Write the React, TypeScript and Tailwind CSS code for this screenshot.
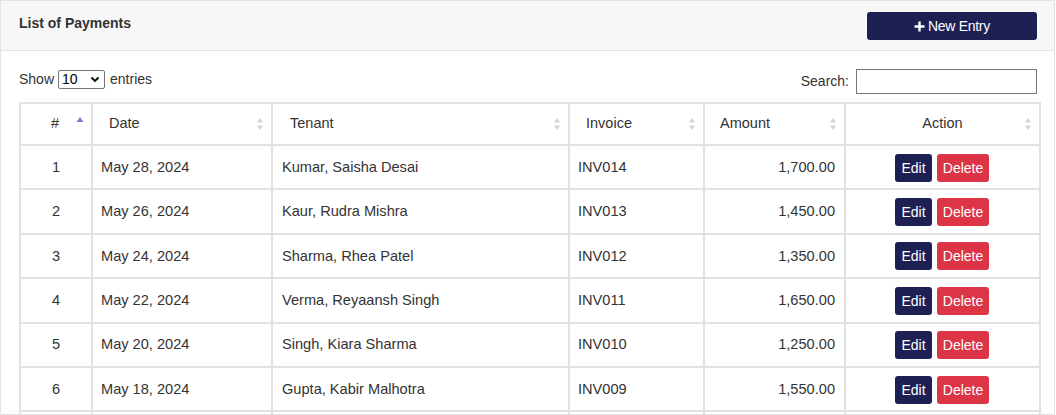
import React from "react";

const rows = [
  ["1", "May 28, 2024", "Kumar, Saisha Desai", "INV014", "1,700.00"],
  ["2", "May 26, 2024", "Kaur, Rudra Mishra", "INV013", "1,450.00"],
  ["3", "May 24, 2024", "Sharma, Rhea Patel", "INV012", "1,350.00"],
  ["4", "May 22, 2024", "Verma, Reyaansh Singh", "INV011", "1,650.00"],
  ["5", "May 20, 2024", "Singh, Kiara Sharma", "INV010", "1,250.00"],
  ["6", "May 18, 2024", "Gupta, Kabir Malhotra", "INV009", "1,550.00"],
  ["7", "May 16, 2024", "Reddy, Anaya Iyer", "INV008", "1,400.00"],
];

function SortIcon({ active }: { active?: boolean }) {
  if (active) {
    return (
      <svg width="8" height="12" viewBox="0 0 8 12" className="absolute right-[7px] top-[12px]">
        <path d="M4 1 L7.5 6 L0.5 6 Z" fill="#7b7fc9" />
      </svg>
    );
  }
  return (
    <svg width="8" height="14" viewBox="0 0 8 14" className="absolute right-[7px] top-[13px]">
      <path d="M4 1 L7 5.5 L1 5.5 Z" fill="#d3d3d3" />
      <path d="M4 13 L7 8.5 L1 8.5 Z" fill="#d3d3d3" />
    </svg>
  );
}

export default function App() {
  const th = "relative border-2 border-[#e2e2e2] border-b-0 font-normal text-[14.5px] text-[#333] h-[42px] p-0";
  const td = "border-2 border-[#e2e2e2] text-[14.6px] text-[#333] p-0 pt-[1px]";
  return (
    <div className="w-[1055px] h-[415px] overflow-hidden border border-[#e3e3e3] bg-white font-['Liberation_Sans',Arial,sans-serif]">
      <div className="h-[50px] bg-[#f7f7f7] border-b border-[#e3e3e3] flex items-start justify-between pl-[18px] pr-[17px]">
        <div className="pt-[12px] text-[14px] font-bold text-[#333]">List of Payments</div>
        <button className="mt-[11px] w-[170px] h-[28px] rounded-[3px] bg-[#1e2054] text-white text-[14px] flex items-center justify-center gap-[3px]">
          <svg width="11" height="11" viewBox="0 0 11 11">
            <path d="M5.5 0.5 V10.5 M0.5 5.5 H10.5" stroke="white" strokeWidth="2.4" />
          </svg>
          <span className="tracking-[-0.3px]">New Entry</span>
        </button>
      </div>
      <div className="pl-[18px] pr-[17px]">
        <div className="flex justify-between items-start h-[51px]">
          <div className="mt-[18px] flex items-center text-[14px] text-[#333]">
            <span>Show</span>
            <div className="relative ml-[4px] mr-[5px] w-[47px] h-[19px] border border-[#767676] rounded-[2px] bg-white flex items-center pl-[3px] text-[14px] text-black">
              10
              <svg width="10" height="7" viewBox="0 0 10 7" className="absolute right-[4px] top-[5px]">
                <path d="M1.5 1.5 L5 5 L8.5 1.5" stroke="#000" strokeWidth="1.8" fill="none" />
              </svg>
            </div>
            <span>entries</span>
          </div>
          <div className="mt-[18px] flex items-center text-[14px] text-[#333]">
            <span className="mr-[7px]">Search:</span>
            <div className="w-[181px] h-[25px] border border-[#767676] bg-white"></div>
          </div>
        </div>
        <table className="border-collapse table-fixed w-[1020px]">
          <colgroup>
            <col className="w-[72px]" />
            <col className="w-[180px]" />
            <col className="w-[297px]" />
            <col className="w-[135px]" />
            <col className="w-[141px]" />
            <col className="w-[195px]" />
          </colgroup>
          <thead>
            <tr className="border-b border-b-black">
              <th className={th + " text-center"}>
                <span className="relative left-[-1px]">#</span>
                <SortIcon active />
              </th>
              <th className={th + " text-left pl-[16px]"}>
                Date
                <SortIcon />
              </th>
              <th className={th + " text-left pl-[17px]"}>
                Tenant
                <SortIcon />
              </th>
              <th className={th + " text-left pl-[16px]"}>
                Invoice
                <SortIcon />
              </th>
              <th className={th + " text-left pl-[15px]"}>
                Amount
                <SortIcon />
              </th>
              <th className={th + " text-center"}>
                Action
                <SortIcon />
              </th>
            </tr>
          </thead>
          <tbody>
            {rows.map((r) => (
              <tr key={r[0]} className="h-[44.4px]">
                <td className={td + " text-center"}>{r[0]}</td>
                <td className={td + " pl-[8px]"}>{r[1]}</td>
                <td className={td + " pl-[9px]"}>{r[2]}</td>
                <td className={td + " pl-[8px]"}>{r[3]}</td>
                <td className={td + " text-right pr-[9px]"}>{r[4]}</td>
                <td className={td}>
                  <div className="flex justify-center gap-[5px] pr-[1px]">
                    <button className="h-[28px] w-[37px] rounded-[3px] bg-[#1e2054] text-white text-[14px] leading-none">Edit</button>
                    <button className="h-[28px] w-[52px] rounded-[3px] bg-[#dc3545] text-white text-[14px] leading-none">Delete</button>
                  </div>
                </td>
              </tr>
            ))}
          </tbody>
        </table>
      </div>
    </div>
  );
}
